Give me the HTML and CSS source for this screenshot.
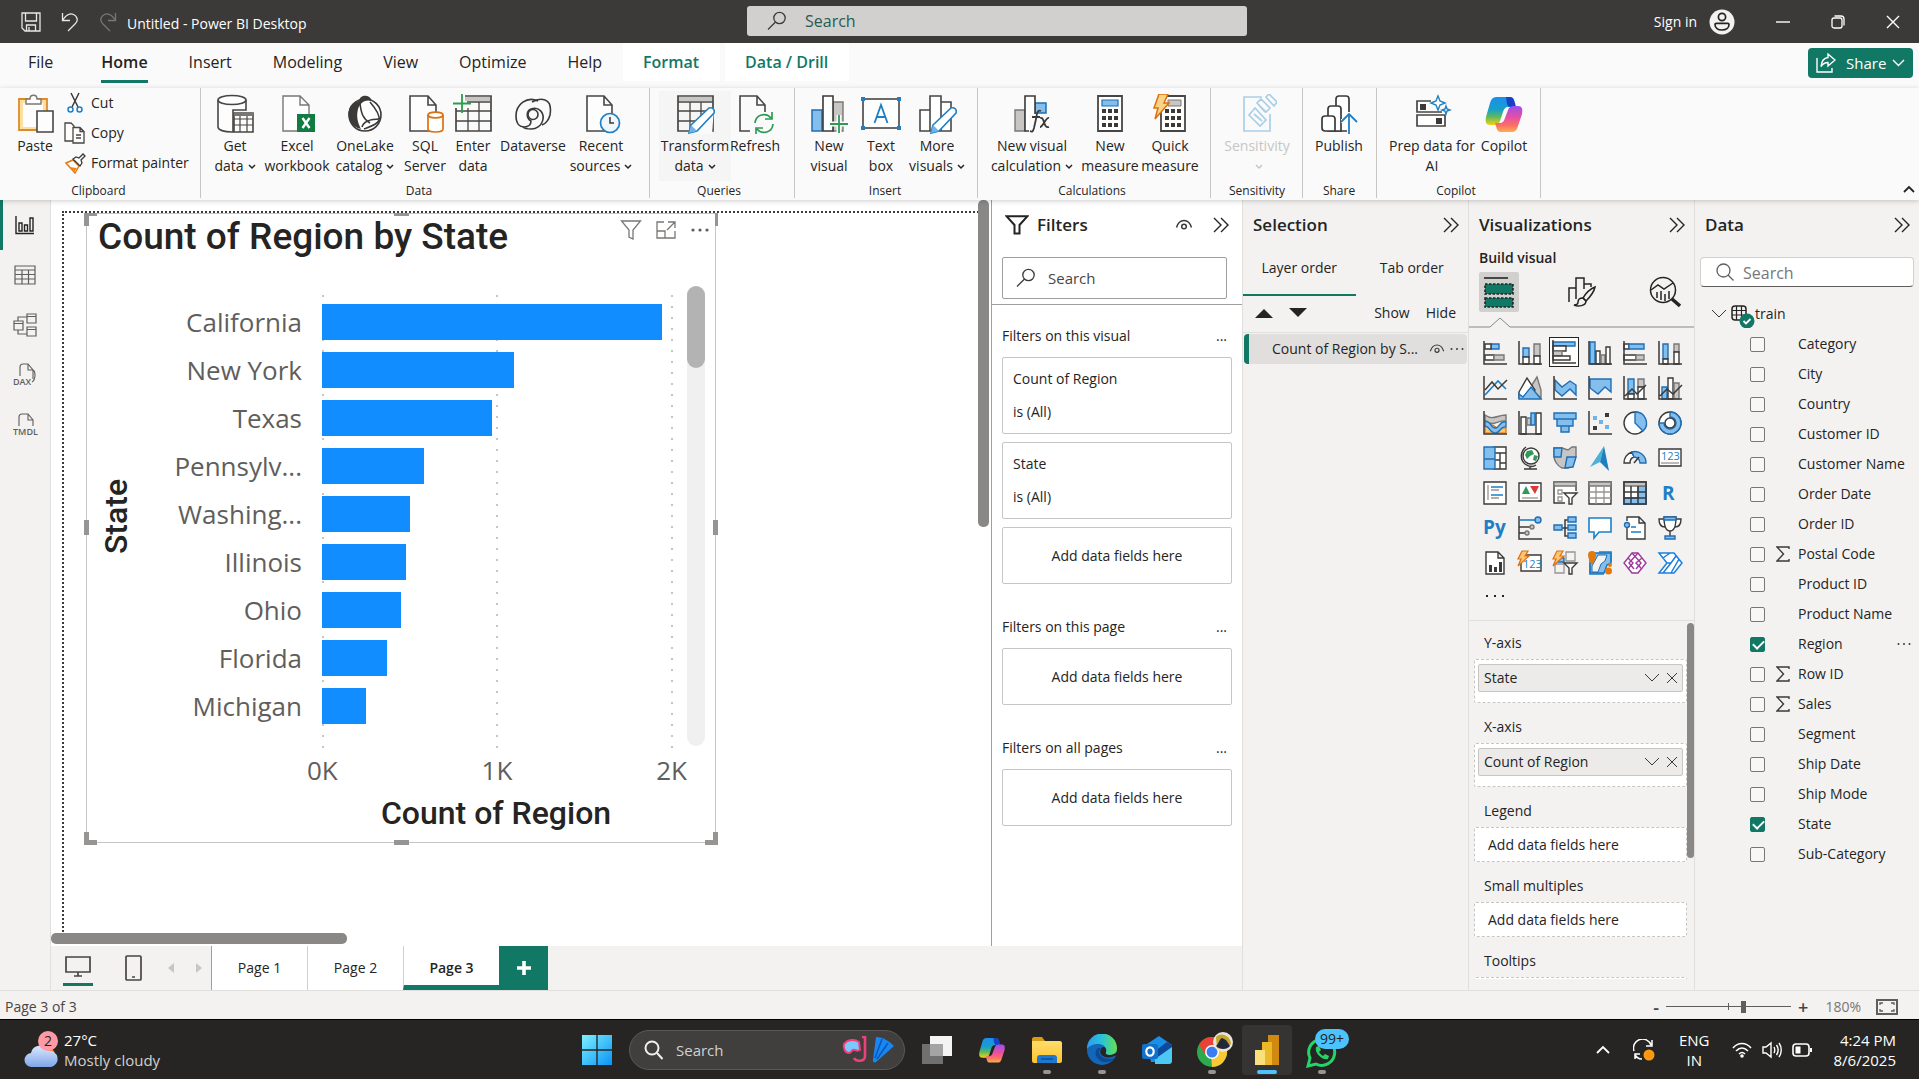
FILE: index.html
```html
<!DOCTYPE html>
<html lang="en">
<head>
<meta charset="utf-8">
<title>Untitled - Power BI Desktop</title>
<link rel="stylesheet" href="styles.css">
</head>
<body>
<svg class="defs" aria-hidden="true">
  <symbol id="i-collapse" viewBox="0 0 18 18"><path d="M2 2l7 7-7 7M9 2l7 7-7 7" fill="none" stroke="#252423" stroke-width="1.4"/></symbol>
  <symbol id="i-search" viewBox="0 0 20 20"><circle cx="12.500" cy="7" r="5.700"/><path d="M8.500 11L1 18.500"/></symbol>
  <symbol id="i-eye" viewBox="0 0 18 12"><path d="M1.500 8.500C3 3.500 6 1.500 9 1.500s6 2 7.500 7"/><circle cx="9" cy="7.500" r="2.300"/></symbol>
  <symbol id="i-down" viewBox="0 0 16 10"><path d="M1 1l7 7 7-7" fill="none" stroke="#3b3a39"/></symbol>
  <symbol id="i-x" viewBox="0 0 12 12"><path d="M1 1l10 10M11 1L1 11" fill="none" stroke="#3b3a39"/></symbol>
  <symbol id="i-caret" viewBox="0 0 8 6"><path d="M1 1l3 3 3-3" fill="none" stroke="currentColor" stroke-width="1.500"/></symbol>
  <symbol id="i-sigma" viewBox="0 0 14 16"><path d="M13 3V1H1l6.500 7L1 15h12v-2" fill="none" stroke="#3b3a39" stroke-width="1.400"/></symbol>
  <symbol id="i-copilot" viewBox="0 0 40 40">
    <path d="M12 3h13c3 0 4 2 5 6l1 4h-6c-4 0-5 2-6 5l-3 9c-1 3-3 4-6 4H6c-4 0-5-3-4-8L6 9c1-4 3-6 6-6z" fill="url(#cpA)"/>
    <path d="M22 3h4c3 0 4 2 5 6l1 4h-6c-3-1-3-3-4-10z" fill="#1742c8"/>
    <path d="M28 38H17c-3 0-4-2-5-6l-1-3h4c4 0 5-2 6-5l3-8c1-3 3-4 6-4h4c4 0 5 3 4 8l-4 12c-1 4-3 6-6 6z" fill="url(#cpB)"/>
  </symbol>
</svg>
<svg class="defs" aria-hidden="true"><defs>
  <linearGradient id="cpA" x1="0" y1="0" x2="0" y2="1"><stop offset="0" stop-color="#1b8df0"/><stop offset=".45" stop-color="#18a0c8"/><stop offset=".7" stop-color="#5cb860"/><stop offset="1" stop-color="#f8d010"/></linearGradient>
  <linearGradient id="cpB" x1="0" y1="0" x2="0" y2="1"><stop offset="0" stop-color="#9a50ee"/><stop offset=".45" stop-color="#e94fa0"/><stop offset=".75" stop-color="#fb7263"/><stop offset="1" stop-color="#fcae50"/></linearGradient>
  <linearGradient id="winG" x1="0" y1="0" x2="1" y2="1"><stop offset="0" stop-color="#7df0ff"/><stop offset="1" stop-color="#0a94f5"/></linearGradient>
  <linearGradient id="edgeG" x1="0" y1="0" x2="1" y2="0"><stop offset="0" stop-color="#2a9df0"/><stop offset=".5" stop-color="#29c3d8"/><stop offset="1" stop-color="#66e04c"/></linearGradient>
  <linearGradient id="folderG" x1="0" y1="0" x2="0" y2="1"><stop offset="0" stop-color="#ffdd6b"/><stop offset="1" stop-color="#fdc22d"/></linearGradient>
  <linearGradient id="cloudG" x1="0" y1="0" x2="0" y2="1"><stop offset="0" stop-color="#dbe8fc"/><stop offset="1" stop-color="#7fa6ea"/></linearGradient>
</defs></svg>

<div class="app">
  <header class="titlebar">
    <div class="title-left">
      <button class="plain" aria-label="Save"><svg width="20" height="20" viewBox="0 0 20 20" fill="none" stroke="#e8e8e8" stroke-width="1.300"><path d="M1 1h18v18H4l-3-3zM4.500 1v8h11V1M5.500 19v-6h9v6M8 15v4"/></svg></button>
      <button class="plain" aria-label="Undo"><svg width="18" height="20" viewBox="0 0 18 20" fill="none" stroke="#e8e8e8" stroke-width="1.300"><path d="M1.500 1v7.500H9M1.500 8.500C5 3 9 1 12.500 2.500s5.500 6 1.500 9.500l-7 7"/></svg></button>
      <button class="plain" aria-label="Redo" disabled><svg width="18" height="20" viewBox="0 0 18 20" fill="none" stroke="#797775" stroke-width="1.300"><path d="M16.500 1v7.500H9M16.500 8.500C13 3 9 1 5.500 2.500S0 8.500 4 12l7 7"/></svg></button>
      <span class="doc-name">Untitled - Power BI Desktop</span>
    </div>
    <label class="title-search"><svg class="line-dark" width="20" height="24" viewBox="0 0 20 20"><use href="#i-search"/></svg><input type="text" placeholder="Search" aria-label="Search"></label>
    <div class="title-right">
      <button class="plain signin">Sign in <svg width="26" height="26" viewBox="0 0 26 26"><circle cx="13" cy="13" r="12.500" fill="#f3f2f1"/><g fill="none" stroke="#252423" stroke-width="1.700"><circle cx="13" cy="8" r="3.600"/><path d="M6 15.500c0-.8.500-1.200 1.200-1.200h11.600c.7 0 1.200.4 1.200 1.200 0 3.500-3 5.500-7 5.500s-7-2-7-5.500z"/></g></svg></button>
      <button class="plain" aria-label="Minimize"><svg width="14" height="14" viewBox="0 0 14 14"><path d="M0 7h14" stroke="#fff" stroke-width="1.400"/></svg></button>
      <button class="plain" aria-label="Restore"><svg width="14" height="14" viewBox="0 0 14 14" fill="none" stroke="#fff" stroke-width="1.300"><rect x="1" y="3" width="10" height="10" rx="2"/><path d="M3.500 1H10a3 3 0 0 1 3 3v6.500"/></svg></button>
      <button class="plain" aria-label="Close"><svg width="14" height="14" viewBox="0 0 14 14"><path d="M1 1l12 12M13 1L1 13" stroke="#fff" stroke-width="1.400"/></svg></button>
    </div>
  </header>

  <nav class="menu">
    <button class="tab file">File</button><button class="tab active"><span>Home</span></button><button class="tab">Insert</button><button class="tab">Modeling</button><button class="tab">View</button><button class="tab">Optimize</button><button class="tab">Help</button><button class="tab context">Format</button><button class="tab context">Data / Drill</button>
    <button class="share"><svg width="20" height="20" viewBox="0 0 20 20" fill="none" stroke="#fff" stroke-width="1.400"><path d="M1 5v14h15v-4"/><path d="M12 1l7 6-7 6V9.500c-3 0-5 1-7 4C5.500 8 8 5 12 4.500z"/></svg>Share<svg width="13" height="8" viewBox="0 0 13 8"><path d="M1 1l5.500 5.500L12 1" fill="none" stroke="#fff" stroke-width="1.400"/></svg></button>
  </nav>

  <section class="ribbon">
    <div class="group clipboard">
      <div class="tiles">
        <button class="tile w56"><svg viewBox="0 0 40 40"><path d="M4 5h28v31H4z" fill="#fbe0a0" stroke="#dd8a2a" stroke-width="1.800"/><path d="M8 9h20v24H8z" fill="#fdfdfd"/><path d="M11 10V5h4c0-5 7-5 7 0h4v5z" fill="#fff" stroke="#797775" stroke-width="1.400"/><path d="M22 17h16v21H22z" fill="#fdfdfd" stroke="#484644" stroke-width="1.600"/></svg><span>Paste</span></button>
        <div class="mini-list">
          <button class="mini"><svg viewBox="0 0 22 22" fill="none"><path d="M7 1l7 14M15 1L8 15" stroke="#3b3a39" stroke-width="1.500"/><circle cx="6.500" cy="17.500" r="2.500" stroke="#1f7fc4" stroke-width="1.500"/><circle cx="15.500" cy="17.500" r="2.500" stroke="#1f7fc4" stroke-width="1.500"/></svg>Cut</button>
          <button class="mini"><svg viewBox="0 0 22 22" fill="#fdfdfd" stroke="#484644" stroke-width="1.300"><path d="M9 19H1V1h6l3 3v2"/><path d="M9 5.500h7l4 4V21H9zM16 5.500v4h4M12 13h5M12 16h5"/></svg>Copy</button>
          <button class="mini"><svg viewBox="0 0 22 22"><path d="M2 11l7-3 6 6-4 7z" fill="#fff" stroke="#e07a10" stroke-width="1.500"/><path d="M5 15l8 1-3 4z" fill="#e88a20"/><path d="M9 7l3-2 3 1 4-4 2 2-4 4 1 3-2 3z" fill="#fff" stroke="#3b3a39" stroke-width="1.300"/></svg>Format painter</button>
        </div>
      </div>
      <div class="group-name">Clipboard</div>
    </div>
    <div class="group data">
      <div class="tiles">
        <button class="tile w60"><svg viewBox="0 0 40 40"><g fill="#fdfdfd" stroke="#484644" stroke-width="1.600"><path d="M3 6v27c0 3 6 5 14 5h1V16h13V6"/><ellipse cx="17" cy="6" rx="14" ry="4.500"/><path d="M19 19h19v19H19z"/><path d="M19 25h19M19 31h19M25 22v16M32 22v16" stroke-width="1.200"/></g><path d="M19 18h19v4H19z" fill="#797775"/></svg><span>Get<br>data<svg class="caret"><use href="#i-caret"/></svg></span></button>
        <button class="tile w64"><svg viewBox="0 0 40 40"><path d="M6 2h17l9 9v26H6zM23 2v9h9" fill="#fdfdfd" stroke="#797775" stroke-width="1.400"/><rect x="20" y="20" width="18" height="18" fill="#107c41"/><path d="M25.500 24l7 10M32.500 24l-7 10" stroke="#fff" stroke-width="2.400"/></svg><span>Excel<br>workbook</span></button>
        <button class="tile w72"><svg viewBox="0 0 40 40"><circle cx="20" cy="21" r="16" fill="#fff" stroke="#3b3a39" stroke-width="1.600"/><path d="M14 7C15 0 25 0 27 7c-6-2-12 1-14 8-2 8 0 14 3 20C6 33 2 24 4 16c1-5 5-8 10-9z" fill="#3b3a39"/><path d="M15 9c1 10 3 16 10 20M25 8c6 7 10 14 9 18s-7 6-15 9M17 33c2-7 10-8 18-8" fill="none" stroke="#3b3a39" stroke-width="1.600"/></svg><span>OneLake<br>catalog<svg class="caret"><use href="#i-caret"/></svg></span></button>
        <button class="tile w48"><svg viewBox="0 0 40 40"><path d="M5 2h18l8 9v26H5zM23 2v9h8" fill="#fdfdfd" stroke="#484644" stroke-width="1.600"/><g fill="#fff" stroke="#dd7010" stroke-width="1.700"><path d="M23 21v14c0 4 15 4 15 0V21"/><ellipse cx="30.500" cy="21" rx="7.500" ry="2.800"/></g></svg><span>SQL<br>Server</span></button>
        <button class="tile w48"><svg viewBox="0 0 40 40"><path d="M12 3h25v4H12z" fill="#c8c6c4"/><g fill="none" stroke="#484644" stroke-width="1.700"><path d="M12 2h26v35H3V14"/><path d="M14 8h23M3 17h35M3 27h35M15 14v23M26 8v29" stroke-width="1.300"/></g><path d="M9 0v19M0 9.500h18" stroke="#2c9c4c" stroke-width="1.800"/></svg><span>Enter<br>data</span></button>
        <button class="tile w72"><svg viewBox="0 0 40 40" fill="none" stroke="#3b3a39" stroke-width="1.600"><path d="M25 7C14 2 3 10 3 22c0 8 4 11 8 11 5 0 7-3 7-6-5-3-5-10 0-12 8-3 13 4 12 10-1 7-7 10-12 10-4 0-7-1-8-2"/><path d="M19 8c5-3 10-3 13-2 6 2 6 9 5 15-1 4-4 9-8 10"/><circle cx="20" cy="20.500" r="5"/></svg><span>Dataverse</span></button>
        <button class="tile w64"><svg viewBox="0 0 40 40"><path d="M6 2h17l8 9v26H6zM23 2v9h8" fill="#fdfdfd" stroke="#484644" stroke-width="1.600"/><circle cx="29" cy="29" r="9.500" fill="#f0f7fd" stroke="#1f7fc4" stroke-width="1.700"/><path d="M29 23v6h4" fill="none" stroke="#3b3a39" stroke-width="1.500"/></svg><span>Recent<br>sources<svg class="caret"><use href="#i-caret"/></svg></span></button>
      </div>
      <div class="group-name">Data</div>
    </div>
    <div class="group queries">
      <div class="tiles">
        <button class="tile w72 hover"><svg viewBox="0 0 40 40"><path d="M3 3h34v4H3z" fill="#c8c6c4"/><path d="M3 2h35v35H3z" fill="none" stroke="#484644" stroke-width="1.700"/><path d="M3 8h35M3 17h35M3 27h35M15 8v29M26 8v29" stroke="#484644" stroke-width="1.300"/><path d="M39 14l-2 26H18z" fill="#fafafa"/><path d="M16 31l18-17c4-1 6 2 5 5L22 37l-8 2z" fill="#fff" stroke="#1f7fc4" stroke-width="1.600"/><path d="M16 31l6 6-8 2z" fill="#6fb3ea"/></svg><span>Transform<br>data<svg class="caret"><use href="#i-caret"/></svg></span></button>
        <button class="tile w48"><svg viewBox="0 0 40 40"><path d="M15 37H5V2h17l8 9v7M22 2v9h8" fill="none" stroke="#484644" stroke-width="1.600"/><path d="M20 29a9 9 0 0 1 16-5M38 30a9 9 0 0 1-16 5M37 18v7h-7M21 40v-6h7" fill="none" stroke="#2f9a55" stroke-width="1.700"/></svg><span>Refresh</span></button>
      </div>
      <div class="group-name">Queries</div>
    </div>
    <div class="group insert">
      <div class="tiles">
        <button class="tile w56"><svg viewBox="0 0 40 40"><path d="M24 8h10v29H24z" fill="#c8c6c4" stroke="#797775" stroke-width="1.400"/><path d="M3 16h10v21H3z" fill="#83beec" stroke="#1f6fb4" stroke-width="1.500"/><path d="M14 2h10v35H14z" fill="#fff" stroke="#3b3a39" stroke-width="1.600"/><path d="M30 21v19M20 30h19" stroke="#fafafa" stroke-width="5"/><path d="M30 21v18M21 30h18" stroke="#2f9a55" stroke-width="1.800"/></svg><span>New<br>visual</span></button>
        <button class="tile w48"><svg viewBox="0 0 40 40"><path d="M2 5h36v29H2z" fill="#fff" stroke="#3b3a39" stroke-width="1.500"/><g fill="#1f7fc4"><path d="M0 3h4v4H0zM36 3h4v4h-4zM0 32h4v4H0zM36 32h4v4h-4z"/></g><path d="M13.500 29L20 11l6.500 18M15.500 23h9" fill="none" stroke="#1f7fc4" stroke-width="1.800"/></svg><span>Text<br>box</span></button>
        <button class="tile w64"><svg viewBox="0 0 40 40"><g fill="#fff" stroke="#484644" stroke-width="1.600"><path d="M24 8h10v29H24zM3 16h10v21H3zM13 2h11v35H13z"/></g><path d="M16 31l18-17c4-1 6 2 5 5L22 37l-8 2z" fill="#fff" stroke="#1f7fc4" stroke-width="1.600"/><path d="M16 31l6 6-8 2z" fill="#6fb3ea"/></svg><span>More<br>visuals<svg class="caret"><use href="#i-caret"/></svg></span></button>
      </div>
      <div class="group-name">Insert</div>
    </div>
    <div class="group calc">
      <div class="tiles">
        <button class="tile w84"><svg viewBox="0 0 40 40"><path d="M3 16h10v21H3z" fill="#c8c6c4" stroke="#797775" stroke-width="1.400"/><path d="M23 9h11v10H23z" fill="#83beec" stroke="#1f6fb4" stroke-width="1.500"/><path d="M13 2h10v35H13z" fill="#fff" stroke="#3b3a39" stroke-width="1.600"/><path d="M17 20h22v20H17z" fill="#fafafa"/><path d="M29 17c-4-2-4 3-5 8l-2 9c-1 4-2 4-4 3M20 23h8M28 24c5-2 3 11 9 9M37 24c-3-1-6 9-9 9" fill="none" stroke="#3b3a39" stroke-width="1.800"/></svg><span>New visual<br>calculation<svg class="caret"><use href="#i-caret"/></svg></span></button>
        <button class="tile w72"><svg viewBox="0 0 40 40"><path d="M8 2h24v35H8z" fill="#fff" stroke="#484644" stroke-width="1.800"/><path d="M12 6h16v6H12z" fill="#83beec" stroke="#1f6fb4" stroke-width="1.200"/><path d="M12 17h16M12 24h16M12 31h16" stroke="#3b3a39" stroke-width="4" stroke-dasharray="4 2"/></svg><span>New<br>measure</span></button>
        <button class="tile w48"><svg viewBox="0 0 40 40"><path d="M11 2h24v35H11z" fill="#fff" stroke="#484644" stroke-width="1.800"/><path d="M18 6h13v6H18z" fill="#c8c6c4" stroke="#797775" stroke-width="1"/><path d="M15 17h16M15 24h16M15 31h16" stroke="#3b3a39" stroke-width="4" stroke-dasharray="4 2"/><path d="M9 0h9l-4 9h5L5 25l3-11H4z" fill="#fbd384" stroke="#dd7010" stroke-width="1.500"/></svg><span>Quick<br>measure</span></button>
      </div>
      <div class="group-name">Calculations</div>
    </div>
    <div class="group sens">
      <div class="tiles">
        <button class="tile w72" disabled><svg viewBox="0 0 40 40" fill="none" stroke="#a8cfe8" stroke-width="1.700"><path d="M25 3H7v34h26V20"/><path d="M12 21l6-7 11 12-6 6zM17 20l8 7"/><path d="M20 9l8 9M24 5l9 9-4 4-9-9zM29 3l3-3 8 8-3 4z"/></svg><span>Sensitivity<br><svg class="caret"><use href="#i-caret"/></svg></span></button>
      </div>
      <div class="group-name">Sensitivity</div>
    </div>
    <div class="group pub">
      <div class="tiles">
        <button class="tile w56"><svg viewBox="0 0 40 40"><g fill="#fff" stroke="#3b3a39" stroke-width="1.700"><path d="M17 37V5c0-2 1-3 3-3h7c2 0 3 1 3 3v32z"/><path d="M9 37V15c0-2 1-3 3-3h7c2 0 3 1 3 3v22z"/><path d="M3 34V25c0-2 1-3 3-3h7c2 0 3 1 3 3v12H6c-2 0-3-1-3-3z"/></g><path d="M30 18v22M22 27h16" stroke="#fafafa" stroke-width="4"/><path d="M30 40V20M22 28l8-8 8 8" fill="none" stroke="#1f7fc4" stroke-width="1.800"/></svg><span>Publish</span></button>
      </div>
      <div class="group-name">Share</div>
    </div>
    <div class="group cop">
      <div class="tiles">
        <button class="tile w96"><svg viewBox="0 0 40 40"><path d="M5 7h28v11H5zM5 21h28v11H5z" fill="#fff" stroke="#484644" stroke-width="1.700"/><path d="M8 10h6v6H8zM24 24h6v6h-6z" fill="#3b3a39"/><path d="M17 0h22v19H17z" fill="#fafafa"/><path d="M17 7h2M17 18h13" stroke="#484644" stroke-width="1.700"/><path d="M26 2l2 5 5 2-5 2-2 5-2-5-5-2 5-2zM34 12l1 3 3 1-3 1-1 3-1-3-3-1 3-1z" fill="#fff" stroke="#1f7fc4" stroke-width="1.400"/></svg><span>Prep data for<br>AI</span></button>
        <button class="tile w48"><svg viewBox="0 0 40 40"><use href="#i-copilot"/></svg><span>Copilot</span></button>
      </div>
      <div class="group-name">Copilot</div>
    </div>
    <button class="plain ribbon-up" aria-label="Collapse ribbon"><svg width="12" height="8" viewBox="0 0 12 8"><path d="M1 7l5-5 5 5" fill="none" stroke="#252423" stroke-width="1.800"/></svg></button>
  </section>

  <main class="work">
    <nav class="rail">
      <button class="rail-item on" aria-label="Report view"><svg width="20" height="20" viewBox="0 0 20 20" fill="none" stroke="#252423" stroke-width="1.400"><path d="M1 1v17.500h18M4 8h3v8H4zM9.500 10h3v6h-3zM15 3h3v13h-3z"/></svg></button>
      <button class="rail-item" aria-label="Table view"><svg width="22" height="20" viewBox="0 0 22 20" fill="none" stroke="#605e5c" stroke-width="1.200"><path d="M1 1h20v18H1zM1 5h20M1 9.500h20M1 14h20M8 5v14M14.500 5v14"/></svg></button>
      <button class="rail-item" aria-label="Model view"><svg width="24" height="24" viewBox="0 0 24 24" fill="none" stroke="#605e5c" stroke-width="1.200"><path d="M1 8h9v9H1zM1 10.500h9M14 1h9v9h-9zM14 3.500h9M14 14h9v9h-9zM14 16.500h9M5 8V4h9M5 17v4h9"/></svg></button>
      <button class="rail-item" aria-label="DAX query view"><svg width="28" height="24" viewBox="0 0 28 24" fill="none" stroke="#605e5c" stroke-width="1.100"><path d="M9 13V4c0-2 1-3 3-3h5l5 6v9M17 1v6h5c2 1 2 3 2 5s0 5-3 7"/><text class="rail-text" x="2" y="22">DAX</text></svg></button>
      <button class="rail-item" aria-label="TMDL view"><svg width="28" height="24" viewBox="0 0 28 24" fill="none" stroke="#605e5c" stroke-width="1.100"><path d="M8 13V4c0-2 1-3 3-3h6l5 6v6M17 1v6h5"/><text class="rail-text" x="2" y="22">TMDL</text></svg></button>
    </nav>

    <div class="center">
      <div class="stage">
        <div class="canvas">
          <div class="page">
            <article class="visual">
              <i class="h tl"></i><i class="h tc"></i><i class="h tr"></i><i class="h ml"></i><i class="h mr"></i><i class="h bl"></i><i class="h bc"></i><i class="h br"></i>
              <header class="visual-head">
                <h2>Count of Region by State</h2>
                <div class="visual-tools"><svg width="22" height="20" viewBox="0 0 22 20"><path d="M1.500 1h19l-7.500 9v9l-4-2v-7z"/></svg><svg width="20" height="18" viewBox="0 0 20 18"><path d="M8 1H1v16h18v-7M1 10h8v7M12 1h7v6M19 1l-8 8"/></svg><svg width="20" height="6" viewBox="0 0 20 6"><g fill="#605e5c" stroke="none"><circle cx="3" cy="3" r="1.600"/><circle cx="10" cy="3" r="1.600"/><circle cx="17" cy="3" r="1.600"/></g></svg></div>
              </header>
              <div class="chart">
                <div class="y-title">State</div>
                <div class="rows">
                  <svg class="gridlines" width="352" height="454"><path d="M1 1V454M175 1V454M350 1V454" stroke="#c8c6c4" stroke-width="2" stroke-dasharray="2 9"/></svg>
                  <div class="bar-row"><span>California</span><b style="width:340px"></b></div>
                  <div class="bar-row"><span>New York</span><b style="width:192px"></b></div>
                  <div class="bar-row"><span>Texas</span><b style="width:170px"></b></div>
                  <div class="bar-row"><span>Pennsylv...</span><b style="width:102px"></b></div>
                  <div class="bar-row"><span>Washing...</span><b style="width:88px"></b></div>
                  <div class="bar-row"><span>Illinois</span><b style="width:84px"></b></div>
                  <div class="bar-row"><span>Ohio</span><b style="width:79px"></b></div>
                  <div class="bar-row"><span>Florida</span><b style="width:65px"></b></div>
                  <div class="bar-row"><span>Michigan</span><b style="width:44px"></b></div>
                </div>
                <div class="chart-scroll"><i></i></div>
                <div class="ticks"><span>0K</span><span>1K</span><span>2K</span></div>
                <div class="x-title">Count of Region</div>
              </div>
            </article>
          </div>
          <i class="vbar"></i><i class="hbar"></i>
        </div>

        <aside class="filters">
          <header class="pane-head"><svg width="24" height="20" viewBox="0 0 24 20"><path d="M1.500 1.200h21L14.500 10v8.500h-5V10z" fill="none" stroke="#252423" stroke-width="2"/></svg><h2>Filters</h2><svg class="eye" width="18" height="12"><use href="#i-eye"/></svg><button class="plain" aria-label="Collapse filters"><svg width="18" height="18"><use href="#i-collapse"/></svg></button></header>
          <div class="filters-search"><label class="box"><svg class="line-dark" width="20" height="20"><use href="#i-search"/></svg><input type="text" placeholder="Search" aria-label="Search filters"></label></div>
          <section class="filter-group">
            <h3>Filters on this visual<span>...</span></h3>
            <div class="card"><p>Count of Region</p><p>is (All)</p></div>
            <div class="card"><p>State</p><p>is (All)</p></div>
            <div class="drop">Add data fields here</div>
          </section>
          <section class="filter-group">
            <h3>Filters on this page<span>...</span></h3>
            <div class="drop">Add data fields here</div>
          </section>
          <section class="filter-group">
            <h3>Filters on all pages<span>...</span></h3>
            <div class="drop">Add data fields here</div>
          </section>
        </aside>
      </div>

      <footer class="pages">
        <button class="view on" aria-label="Desktop layout"><svg width="26" height="22" viewBox="0 0 26 22" fill="none" stroke="#484644" stroke-width="1.700"><path d="M1 1h24v15H1zM13 16v4M9 20h8"/></svg></button>
        <button class="view" aria-label="Mobile layout"><svg width="18" height="26" viewBox="0 0 18 26"><rect x="1" y="1" width="15" height="24" rx="1" fill="none" stroke="#484644" stroke-width="1.700"/><path d="M7 22h3" stroke="#484644" stroke-width="1.500"/></svg></button>
        <svg class="step" width="8" height="12" viewBox="0 0 8 12"><path d="M7 1v10L1 6z" fill="#c8c6c4"/></svg>
        <svg class="step" width="8" height="12" viewBox="0 0 8 12"><path d="M1 1v10l6-5z" fill="#c8c6c4"/></svg>
        <button class="page-tab">Page 1</button><button class="page-tab">Page 2</button><button class="page-tab on">Page 3</button>
        <button class="page-add" aria-label="New page"><svg width="14" height="14" viewBox="0 0 14 14"><path d="M7 0v14M0 7h14" stroke="#fff" stroke-width="3.600"/></svg></button>
      </footer>
    </div>

    <aside class="pane selection">
      <header class="pane-head"><h2>Selection</h2><button class="plain" aria-label="Collapse selection"><svg width="18" height="18"><use href="#i-collapse"/></svg></button></header>
      <div class="order-tabs"><button class="on">Layer order</button><button>Tab order</button></div>
      <div class="order-tools"><svg width="18" height="10" viewBox="0 0 18 10"><path d="M0 10l9-9 9 9z" fill="#252423"/></svg><svg width="18" height="10" viewBox="0 0 18 10"><path d="M0 0l9 9 9-9z" fill="#252423"/></svg><button class="plain show">Show</button><button class="plain">Hide</button></div>
      <div class="layer"><span>Count of Region by S...</span><svg class="eye" width="16" height="12" viewBox="0 0 18 12"><use href="#i-eye"/></svg><svg width="14" height="4" viewBox="0 0 14 4" fill="#3b3a39"><circle cx="1.500" cy="2" r="1"/><circle cx="7" cy="2" r="1"/><circle cx="12.500" cy="2" r="1"/></svg></div>
    </aside>

    <aside class="pane viz">
      <header class="pane-head"><h2>Visualizations</h2><button class="plain" aria-label="Collapse visualizations"><svg width="18" height="18"><use href="#i-collapse"/></svg></button></header>
      <h3 class="build">Build visual</h3>
      <div class="modes">
        <button class="mode on" aria-label="Build visual"><svg width="32" height="32" viewBox="0 0 32 32"><path d="M1 2h24" stroke="#252423" stroke-width="1.600"/><path d="M2 8h28v10H2zM2 22h28v9H2z" fill="#117865" stroke="#252423" stroke-width="1.600" stroke-dasharray="2.500 1.500"/></svg></button>
        <button class="mode" aria-label="Format visual"><svg width="28" height="30" viewBox="0 0 28 30" fill="none" stroke="#252423" stroke-width="1.500"><path d="M1 25V11h7M8 22V1h8v11M16 7h7v3"/><path d="M27 10c-5 2-9 6-12 11l3 3c4-4 8-9 9-14z"/><path d="M15 21c-4 0-5 2-5 4s-2 3-4 3c4 2 12 1 12-4z"/></svg></button>
        <button class="mode" aria-label="Analytics"><svg width="32" height="32" viewBox="0 0 32 32" fill="none" stroke="#252423" stroke-width="1.500"><circle cx="14" cy="14" r="12.500"/><path d="M2 14l7-5 6 4 9-6M8 22v-6M12 24v-9M16 25v-7M20 23v-8"/><path d="M23 23l8 7" stroke-width="3.500"/></svg></button>
      </div>
      <svg class="notch" width="225" height="11" viewBox="0 0 225 11"><path d="M0 10H21L31 1L41 10H225" fill="none" stroke="#8a8886"/></svg>
      <div class="gallery">
        <button aria-label="Stacked bar chart"><svg viewBox="0 0 24 24"><path class="b" d="M8 3h8v5H8z"/><path class="w" d="M2 3h6v5H2z"/><path class="w" d="M2 14h9v5H2z"/><path class="g" d="M11 14h10v5H11z"/><path class="n" d="M1 0v23h23"/></svg></button>
        <button aria-label="Stacked column chart"><svg viewBox="0 0 24 24"><path class="b" d="M5 7h6v9H5z"/><path class="w" d="M5 16h6v7H5z"/><path class="g" d="M16 3h6v12h-6z"/><path class="w" d="M16 15h6v8h-6z"/><path class="n" d="M1 0v23h23"/></svg></button>
        <button class="picked" aria-label="Clustered bar chart"><svg viewBox="0 0 24 24"><path class="b" d="M1 2h22v4H1z"/><path class="w" d="M1 6h13v5H1z"/><path class="g" d="M1 11h9v5H1z"/><path class="w" d="M1 16h17v4H1z"/><path class="n" d="M1 0v23h23"/></svg></button>
        <button aria-label="Clustered column chart"><svg viewBox="0 0 24 24"><path class="b" d="M2 1h5v22H2z"/><path class="w" d="M8 10h4v13H8z"/><path class="g" d="M13 14h4v9h-4z"/><path class="w" d="M18 6h4v17h-4z"/><path class="n" d="M1 0v23h23"/></svg></button>
        <button aria-label="100% stacked bar chart"><svg viewBox="0 0 24 24"><path class="w" d="M1 3h5v5H1z"/><path class="b" d="M6 3h15v5H6z"/><path class="w" d="M1 14h12v5H1z"/><path class="g" d="M13 14h8v5h-8z"/><path class="n" d="M1 0v23h23"/></svg></button>
        <button aria-label="100% stacked column chart"><svg viewBox="0 0 24 24"><path class="b" d="M5 3h5v15H5z"/><path class="w" d="M5 18h5v5H5z"/><path class="g" d="M16 3h5v8h-5z"/><path class="w" d="M16 11h5v12h-5z"/><path class="n" d="M1 0v23h23"/></svg></button>

        <button aria-label="Line chart"><svg viewBox="0 0 24 24"><path class="bl" d="M2 19L15 5l8 8"/><path class="n" d="M2 14L9 6l6 7 9-9"/><path class="n" d="M1 0v23h23"/></svg></button>
        <button aria-label="Area chart"><svg viewBox="0 0 24 24"><path class="g" d="M12 12l7-11 4 13v8z"/><path class="w" d="M1 16L9 2l8 12-4 8H1z"/><path class="b" d="M1 23l0-5 4 3 8-10 10 12z"/></svg></button>
        <button aria-label="Stacked area chart"><svg viewBox="0 0 24 24"><path class="b" d="M2 4l7 7 8-6 6 4v10l-6-6-8 7-7-6z"/><path class="n" d="M1 0v23h23"/></svg></button>
        <button aria-label="100% stacked area chart"><svg viewBox="0 0 24 24"><path class="b" d="M2 3h21v13l-6-5-7 7-8-6z"/><path class="n" d="M1 0v23h23"/></svg></button>
        <button aria-label="Line and stacked column chart"><svg viewBox="0 0 24 24"><path class="b" d="M5 3h6v15H5z"/><path class="w" d="M5 18h6v5H5z"/><path class="g" d="M15 3h6v8h-6z"/><path class="w" d="M15 11h6v12h-6z"/><path class="n" d="M1 0v23h23M2 20l7-7 5 5 9-9"/></svg></button>
        <button aria-label="Line and clustered column chart"><svg viewBox="0 0 24 24"><path class="b" d="M4 11h5v12H4z"/><path class="w" d="M10 2h5v21h-5z"/><path class="g" d="M16 7h5v16h-5z"/><path class="n" d="M1 0v23h23M2 20l7-7 6 5 9-9"/></svg></button>

        <button aria-label="Ribbon chart"><svg viewBox="0 0 24 24"><path class="g" d="M2 4c8 6 12 0 21 0v6c-9-1-12 6-21 0z"/><path class="o" d="M2 14h8l4 3h9v5H2z"/><path class="b" d="M2 10c8 1 5 8 11 7 4-1 4-8 10-6v5c-6-1-5 5-10 6-7 0-5-6-11-7z"/><path class="n" d="M1 0v23h23"/></svg></button>
        <button aria-label="Waterfall chart"><svg viewBox="0 0 24 24"><path class="w" d="M3 6h5v17H3zM18 2h5v21h-5z"/><path class="g" d="M9 7h4v7H9z"/><path class="b" d="M13 2h4v12h-4z"/><path class="n" d="M1 0v23h23"/></svg></button>
        <button aria-label="Funnel"><svg viewBox="0 0 24 24"><path class="b" d="M1 2h22v6H1zM4 8h16v7H4zM8 15h8v6H8z"/></svg></button>
        <button aria-label="Scatter chart"><svg viewBox="0 0 24 24"><path fill="#6fb3ea" d="M5 5h4v4H5zM11 9h4v4h-4zM17 14h4v4h-4z"/><path fill="#3b3a39" d="M17 2h4v4h-4zM5 15h4v4H5z"/><path class="n" d="M1 0v23h23"/></svg></button>
        <button aria-label="Pie chart"><svg viewBox="0 0 24 24"><circle class="w" cx="12" cy="12" r="11"/><path class="b" d="M12 1a11 11 0 0 1 8 19l-8-8z"/></svg></button>
        <button aria-label="Donut chart"><svg viewBox="0 0 24 24"><circle class="w" cx="12" cy="12" r="11"/><path class="b" d="M12 1a11 11 0 1 1-11 11h5a6 6 0 1 0 6-6z"/><circle class="w" cx="12" cy="12" r="5"/></svg></button>

        <button aria-label="Treemap"><svg viewBox="0 0 24 24"><path class="w" d="M11 1h12v22H11zM11 7h12M17 7v16M11 14h6M17 17h6"/><path class="b" d="M1 1h11v22H1zM1 13h11"/></svg></button>
        <button aria-label="Map"><svg viewBox="0 0 24 24"><circle class="w" cx="13" cy="10" r="8"/><path d="M9 5l5-1 2 4-4 2-3 3-2-4zM16 9l4 1-2 5-3-1z" fill="#2f9a55"/><path class="n" d="M8 1C2 5 2 14 7 18c4 3 8 3 11 1M12 20v3M6 23h13"/></svg></button>
        <button aria-label="Filled map"><svg viewBox="0 0 24 24"><path class="g" d="M1 2h8l6 2 4-3h4v9c-1 6-3 10-8 12H9C4 20 1 14 1 10z"/><path class="b" d="M1 2h8l-1 9H1zM14 11h9l-3 10-8 1z"/></svg></button>
        <button aria-label="Azure map"><svg viewBox="0 0 24 24"><path d="M16 0L2 21l10-5z" fill="#4fb0d8"/><path d="M16 0l5 25-9-9z" fill="#1b7fc0"/></svg></button>
        <button aria-label="Gauge"><svg viewBox="0 0 24 24"><path class="w" d="M1 17A11 11 0 0 1 9 6l2 5a6 6 0 0 0-4 6z"/><path class="b" d="M9 6a11 11 0 0 1 14 11h-6a6 6 0 0 0-6-6z"/><path class="n" d="M11 17l5-6"/></svg></button>
        <button aria-label="Card"><svg viewBox="0 0 24 24"><path class="w" d="M1 3h22v17H1z"/><path class="gl" d="M3 17h18"/><text class="num" x="3" y="14">123</text></svg></button>

        <button aria-label="Multi-row card"><svg viewBox="0 0 24 24"><path class="w" d="M1 1h22v22H1z"/><path class="gl" d="M5 4v15M8 9h8M8 17h8"/><path class="bl" d="M8 6h12M8 14h12" stroke-width="2"/></svg></button>
        <button aria-label="KPI"><svg viewBox="0 0 24 24"><path class="w" d="M1 2h22v18H1z"/><path d="M4 13l4-8 4 8z" fill="#2f9a55"/><path d="M12 5h9l-4 8z" fill="#d83b3b"/><path class="gl" d="M4 17h16"/></svg></button>
        <button aria-label="Slicer"><svg viewBox="0 0 24 24"><path class="w" d="M12 22H1V1h22v9"/><path class="g" d="M1 1h22v4H1z"/><path class="gl" d="M5 9h4v4H5zM5 16h4v4H5z"/><path class="w" d="M11 12h13l-5 5v6h-3v-6z"/></svg></button>
        <button aria-label="Table"><svg viewBox="0 0 24 24"><path class="w" d="M1 1h22v22H1z"/><path class="g" d="M1 1h22v4H1z"/><path class="gl" d="M1 11h22M1 17h22M8 5v18M16 5v18"/></svg></button>
        <button aria-label="Matrix"><svg viewBox="0 0 24 24"><path class="w" d="M1 1h22v22H1z"/><path class="b" d="M15 5h8v18H1v-6h14z"/><path class="g" d="M1 1h22v4H1z"/><path class="n" d="M1 11h22M1 17h22M8 5v18M15 5v18M1 1h22v22H1z"/></svg></button>
        <button aria-label="R visual"><svg viewBox="0 0 24 24"><text class="letters" x="4" y="19">R</text></svg></button>

        <button aria-label="Python visual"><svg viewBox="0 0 24 24"><text class="letters" x="0" y="18">Py</text></svg></button>
        <button aria-label="Key influencers"><svg viewBox="0 0 24 24"><path class="n" d="M1 0v23h23M1 11h11M1 17h6"/><path class="bl" d="M2 4h16"/><circle class="b" cx="20" cy="4" r="3"/><circle class="g" cx="14" cy="11" r="2"/><circle class="g" cx="9" cy="17" r="2"/></svg></button>
        <button aria-label="Decomposition tree"><svg viewBox="0 0 24 24"><path class="n" d="M8 12h7M15 4h-3v16h3"/><path class="b" d="M1 9h8v5H1zM15 1h8v5h-8zM15 9h8v5h-8zM15 17h8v5h-8z"/></svg></button>
        <button aria-label="Q&amp;A"><svg viewBox="0 0 24 24"><path d="M1 2h22v14H11l-5 6v-6H1z" fill="#fff" class="bl"/></svg></button>
        <button aria-label="Narrative"><svg viewBox="0 0 24 24"><path class="w" d="M4 5V1h12l6 6v16H4V11M16 1v6h6"/><path class="bl" d="M8 11h5M8 16h10"/><circle class="b" cx="4" cy="9" r="2.500"/></svg></button>
        <button aria-label="Metrics"><svg viewBox="0 0 24 24"><path class="w" d="M6 3H1c0 6 2 8 6 8M18 3h5c0 6-2 8-6 8M6 1h12c0 10-2 14-6 14S6 11 6 1zM12 15v5"/><path class="b" d="M6 1h12v3H6zM7 20h10v3H7z"/></svg></button>

        <button aria-label="Paginated report"><svg viewBox="0 0 24 24"><path class="w" d="M3 1h12l6 6v16H3zM15 1v6h6"/><path d="M6 14h3v7H6zM11 16h3v5h-3zM16 11h3v10h-3z" fill="#3b3a39"/></svg></button>
        <button aria-label="New card"><svg viewBox="0 0 24 24"><path class="w" d="M3 4h20v16H3z"/><text class="num" x="5" y="17">123</text><path class="o" d="M4 0h6L7 5h4L0 15l3-7H0z"/></svg></button>
        <button aria-label="Button slicer"><svg viewBox="0 0 24 24"><path class="gl" d="M13 1h9v9h-9zM2 13h9v9H2z"/><path class="b" d="M5 7h6v4H5z"/><path class="w" d="M11 12h13l-5 5v6h-3v-6z"/><path class="o" d="M4 0h6L7 5h4L0 15l3-7H0z"/></svg></button>
        <button aria-label="ArcGIS map"><svg viewBox="0 0 24 24"><path class="b" d="M2 8V2h21v10l-4 2-3 8H2z"/><path class="a" d="M10 4h9l-2 6-4 3-3 8H4v-6z"/><path class="bl" d="M2 12v11h14M11 1h12v10"/><path d="M0 4a4 4 0 0 1 8 0c0 4-4 10-4 10S0 8 0 4zM17 20a3 3 0 1 0 7 0 3 3 0 0 0-7 0zM20 14a2 2 0 1 0 4 0 2 2 0 0 0-4 0z" fill="#e07a10"/></svg></button>
        <button aria-label="Power Apps"><svg viewBox="0 0 24 24" fill="#fff" stroke="#9b3a9b" stroke-width="1.400"><path d="M9 2h6l8 10-8 10H9L1 12z"/><path d="M9 2l9 10-5 6M15 2L6 12l5 6M5 7l5 5-5 6M19 7l-6 5 6 6"/></svg></button>
        <button aria-label="Power Automate"><svg viewBox="0 0 24 24" fill="#fff" stroke="#1b7fe0" stroke-width="1.500"><path d="M1 2h15l8 10-8 10H1l8-10zM5 7l7-5M9 12l4 0L5 22M13 12l5-7M13 22l8-14"/></svg></button>
      </div>
      <div class="more-viz"><i></i><i></i><i></i></div>
      <div class="wells">
        <i class="wells-bar"></i>
        <h4>Y-axis</h4>
        <div class="well filled"><div class="pill">State<svg width="16" height="10"><use href="#i-down"/></svg><svg width="12" height="12"><use href="#i-x"/></svg></div></div>
        <h4>X-axis</h4>
        <div class="well filled"><div class="pill">Count of Region<svg width="16" height="10"><use href="#i-down"/></svg><svg width="12" height="12"><use href="#i-x"/></svg></div></div>
        <h4>Legend</h4>
        <div class="well">Add data fields here</div>
        <h4>Small multiples</h4>
        <div class="well">Add data fields here</div>
        <h4>Tooltips</h4>
        <div class="well"></div>
      </div>
    </aside>

    <aside class="pane fields">
      <header class="pane-head"><h2>Data</h2><button class="plain" aria-label="Collapse data"><svg width="18" height="18"><use href="#i-collapse"/></svg></button></header>
      <label class="box data-search"><svg width="18" height="18" viewBox="0 0 18 18" fill="none" stroke="#605e5c" stroke-width="1.300"><circle cx="7.500" cy="7.500" r="6.500"/><path d="M12 12l5.500 5.500"/></svg><input type="text" placeholder="Search" aria-label="Search fields"></label>
      <div class="table-name"><svg width="16" height="10"><use href="#i-down"/></svg><svg width="24" height="24" viewBox="0 0 24 24"><rect x="1" y="2" width="14" height="14" rx="3" fill="none" stroke="#252423" stroke-width="1.500"/><path d="M1 6.500h14M1 11h14M5.500 2v14M10.500 2v14" stroke="#252423" stroke-width="1.200"/><circle cx="16" cy="17" r="7.500" fill="#117865"/><path d="M12.500 17l2.500 2.500 4.500-4.500" fill="none" stroke="#fff" stroke-width="1.800"/></svg>train</div>
      <ul class="field-list">
        <li><label><input type="checkbox"><i></i>Category</label></li>
        <li><label><input type="checkbox"><i></i>City</label></li>
        <li><label><input type="checkbox"><i></i>Country</label></li>
        <li><label><input type="checkbox"><i></i>Customer ID</label></li>
        <li><label><input type="checkbox"><i></i>Customer Name</label></li>
        <li><label><input type="checkbox"><i></i>Order Date</label></li>
        <li><label><input type="checkbox"><i></i>Order ID</label></li>
        <li><label><input type="checkbox"><i><svg width="14" height="16"><use href="#i-sigma"/></svg></i>Postal Code</label></li>
        <li><label><input type="checkbox"><i></i>Product ID</label></li>
        <li><label><input type="checkbox"><i></i>Product Name</label></li>
        <li><label><input type="checkbox" checked><i></i>Region</label><svg class="more" width="14" height="4" viewBox="0 0 14 4" fill="#3b3a39"><circle cx="1.500" cy="2" r="1"/><circle cx="7" cy="2" r="1"/><circle cx="12.500" cy="2" r="1"/></svg></li>
        <li><label><input type="checkbox"><i><svg width="14" height="16"><use href="#i-sigma"/></svg></i>Row ID</label></li>
        <li><label><input type="checkbox"><i><svg width="14" height="16"><use href="#i-sigma"/></svg></i>Sales</label></li>
        <li><label><input type="checkbox"><i></i>Segment</label></li>
        <li><label><input type="checkbox"><i></i>Ship Date</label></li>
        <li><label><input type="checkbox"><i></i>Ship Mode</label></li>
        <li><label><input type="checkbox" checked><i></i>State</label></li>
        <li><label><input type="checkbox"><i></i>Sub-Category</label></li>
      </ul>
    </aside>
  </main>

  <footer class="status">
    <span>Page 3 of 3</span>
    <div class="zoom"><button class="plain">-</button><input type="range" min="10" max="400" value="255" aria-label="Zoom"><button class="plain">+</button><span class="pct">180%</span><svg width="22" height="16" viewBox="0 0 22 16" fill="none" stroke="#605e5c"><path d="M1 1h20v14H1z" stroke-width="2"/><path d="M4 6V4h3M15 4h3v2M4 10v2h3M15 12h3v-2" stroke-width="1.300"/></svg></div>
  </footer>

  <footer class="taskbar">
    <div class="weather"><svg width="36" height="38" viewBox="0 0 36 38"><circle cx="22" cy="24" r="9" fill="#f47b20"/><path d="M8 36a7 7 0 0 1-1-14 9 9 0 0 1 17-2 8 8 0 0 1 3 16z" fill="url(#cloudG)"/><circle cx="24" cy="10" r="10" fill="#ff9aa4"/><text class="badge-num" x="24" y="15">2</text></svg><p>27°C<br><span>Mostly cloudy</span></p></div>
    <div class="dock">
      <button class="app-btn" aria-label="Start"><svg width="30" height="30" viewBox="0 0 30 30"><path d="M0 0h14.300v14.300H0zM15.700 0H30v14.300H15.700zM0 15.700h14.300V30H0zM15.700 15.700H30V30H15.700z" fill="url(#winG)"/></svg></button>
      <div class="task-search"><svg width="20" height="20" viewBox="0 0 20 20" fill="none" stroke="#f0f0f0" stroke-width="2"><circle cx="8" cy="8" r="6.500"/><path d="M13 13l5.500 6"/></svg><input type="text" placeholder="Search" aria-label="Search Windows"><svg width="52" height="28" viewBox="0 0 52 28"><path d="M2 8c4-5 11-5 15-2l1 8c-3 2-5-1-7 0s-2 3-4 3c-4 0-6-5-5-9z" fill="#7cc8ff" stroke="#f0407c" stroke-width="2"/><path d="M20 1h3v19c0 6-9 6-11 2" fill="none" stroke="#f0407c" stroke-width="2.600"/><path d="M34 1c7 0 13 4 18 9L34 26c-1 1-4 0-3-2z" fill="#1887f2"/><path d="M40 3l-7 19M46 7L35 23" stroke="#0a55b8" stroke-width="1.500"/></svg></div>
      <button class="app-btn" aria-label="Task view"><svg width="32" height="30" viewBox="0 0 32 30"><path d="M9 1h22v20H9z" fill="#f4f4f4"/><path d="M1 9h21v20H1z" fill="#8a8a8a" opacity=".75"/></svg></button>
      <button class="app-btn" aria-label="Copilot"><svg width="30" height="28"><use href="#i-copilot"/></svg></button>
      <button class="app-btn open" aria-label="File Explorer"><svg width="32" height="28" viewBox="0 0 32 28"><path d="M1 3c0-1 1-2 2-2h8l3 4h-3v5H1z" fill="#d99a12"/><path d="M1 5h28c1 0 2 1 2 2v18c0 1-1 2-2 2H3c-1 0-2-1-2-2z" fill="url(#folderG)"/><path d="M6 27v-5c0-2 1-3 3-3h14c2 0 3 1 3 3v5z" fill="#1c78d0"/><path d="M10 23h12" stroke="#0d4f96" stroke-width="1.500"/></svg></button>
      <button class="app-btn open" aria-label="Edge"><svg width="32" height="32" viewBox="0 0 32 32"><circle cx="16" cy="16" r="15" fill="#1466b8"/><path d="M1 15A15 15 0 0 1 31 14c0 6-5 8-10 7-3-1-1-3-1-5 0-4-4-6-8-6C7 10 3 12 1 15z" fill="url(#edgeG)"/><path d="M12 14c-6 5 0 15 9 14 3 0 6-2 8-4-6 2-15 1-16-6 0-2 1-3 2-4z" fill="#0b4a94"/><path d="M17 13c-4 2-4 8 2 10 4 1 8 0 12-2v-3c-3 3-8 4-11 2-1-1 1-3 0-5s-2-2-3-2z" fill="#262524"/></svg></button>
      <button class="app-btn" aria-label="Outlook"><svg width="32" height="30" viewBox="0 0 32 30"><path d="M6 9l12-8 13 9v17H10z" fill="#1a8fe6"/><path d="M31 11L14 20v9h14c2 0 3-1 3-3z" fill="#4cc8f5"/><path d="M10 19L26 7l5 3v2L14 24z" fill="#0d4a9c"/><rect x="1" y="9" width="16" height="15" rx="2" fill="#1170cc"/><ellipse cx="9" cy="16.500" rx="3.700" ry="4.200" fill="none" stroke="#fff" stroke-width="2.200"/></svg></button>
      <button class="app-btn open badged" aria-label="Chrome"><svg width="38" height="36" viewBox="0 0 38 36"><circle cx="16" cy="20" r="15" fill="#2da94f"/><path d="M3 12.500A15 15 0 0 1 29 12.500L16 20z" fill="#ea4335"/><path d="M29 12.500A15 15 0 0 1 16 35l-1-13 2-9z" fill="#fcc934"/><path d="M3 12.500L10 24l6-4V12.500z" fill="#ea4335"/><circle cx="16" cy="20" r="7" fill="#fff"/><circle cx="16" cy="20" r="5.500" fill="#3b7df0"/><circle cx="27" cy="10" r="10" fill="#e8e4dc"/><path d="M20 5c6-6 15 0 15 7-4 4-9 6-14 4z" fill="#c7a62c"/><path d="M20 14c3-2 3-7 6-8l4 2 4 6c-3 4-10 4-14 0z" fill="#20283a"/></svg></button>
      <button class="app-btn open current" aria-label="Power BI"><svg width="26" height="30" viewBox="0 0 26 30"><path d="M14 0h11v30H14z" fill="#d08a12"/><path d="M8 7h10v23H8z" fill="#ecb827"/><path d="M1 15h10v15H1z" fill="#f9e07c"/></svg></button>
      <button class="app-btn open" aria-label="WhatsApp"><svg width="34" height="36" viewBox="0 0 34 36"><path d="M3 34l2-8A13 13 0 1 1 11 32z" fill="none" stroke="#25d366" stroke-width="3"/><path d="M11 15c-2 6 7 14 12 12l1-3-4-2-2 2c-2-1-3-3-4-4l2-2-2-4z" fill="#25d366"/></svg><span class="count">99+</span></button>
    </div>
    <div class="tray">
      <svg width="16" height="10" viewBox="0 0 16 10"><path d="M2 8l6-6 6 6" fill="none" stroke="#fff" stroke-width="1.800"/></svg>
      <svg width="24" height="22" viewBox="0 0 24 22"><path d="M1 12A9 9 0 0 1 18 6M19 1v6h-6M9 20c-3 0-6-2-7-5M2 20v-5h5" fill="none" stroke="#fff" stroke-width="1.500"/><circle cx="16" cy="16" r="5.500" fill="#ff9810"/></svg>
      <p class="lang">ENG<br>IN</p>
      <div class="net">
        <svg width="20" height="16" viewBox="0 0 20 16" fill="none" stroke="#fff" stroke-width="1.600"><path d="M1 6c5-6 13-6 18 0M4 9c4-4 8-4 12 0M7 12c2-2 4-2 6 0"/><circle cx="10" cy="14" r="1" fill="#fff"/></svg>
        <svg width="20" height="18" viewBox="0 0 20 18" fill="none" stroke="#fff" stroke-width="1.400"><path d="M1 6h3l5-4v14l-5-4H1zM12 6c1 2 1 4 0 6M14.500 4c2 3 2 7 0 10M17 2c3 4 3 10 0 14"/></svg>
        <svg width="20" height="14" viewBox="0 0 20 14"><rect x="1" y="1" width="16" height="12" rx="3" fill="none" stroke="#fff" stroke-width="1.600"/><path d="M3.500 3.500h5v7h-5zM18 5h2v4h-2z" fill="#fff"/></svg>
      </div>
      <p class="clock">4:24 PM<br>8/6/2025</p>
    </div>
  </footer>
</div>
</body>
</html>
```
FILE: styles.css
```css
* { box-sizing: border-box; }
body { margin: 0; font: 14px/20px "Open Sans", "Noto Sans", sans-serif; color: #252423; }
button, input { font: inherit; color: inherit; }
button { background: none; border: 0; padding: 0; }
h2, h3, h4, p, ul { margin: 0; padding: 0; font-weight: 400; font-size: inherit; }
svg { flex: none; }
.defs { position: absolute; width: 0; height: 0; }
.plain { display: flex; align-items: center; }
.line-dark, .eye { fill: none; stroke: #3b3a39; stroke-width: 1.3px; }
.app { display: flex; flex-direction: column; height: 100vh; min-height: 1000px; overflow: hidden; }

/* Title bar */
.titlebar { display: flex; align-items: center; justify-content: space-between; height: 43px; background: #3b3a39; color: #fff; flex: none; }
.title-left { display: flex; align-items: center; gap: 20px; padding-left: 21px; flex: 1; }
.doc-name { padding-top: 5px; margin-left: -10px; }
.title-search { display: flex; align-items: center; gap: 16px; width: 500px; height: 30px; margin: 0 0 2px 73px; padding-left: 20px; background: #d2d0ce; border-radius: 3px; }
.title-search input { flex: 1; min-width: 0; border: 0; background: none; font-size: 16px; }
.title-search input::placeholder { color: #2b5a4f; opacity: 1; }
.title-right { display: flex; align-items: center; justify-content: flex-end; gap: 41px; padding-right: 19px; flex: 1; }
.signin { gap: 12px; }

/* Menu */
.menu { display: flex; align-items: flex-start; height: 45px; padding-left: 8px; background: #fafafa; font-size: 16px; flex: none; }
.tab { height: 38px; padding: 0 21px 0 20px; }
.file { margin-right: 7px; }
.tab.active { font-weight: 600; }
.tab.active span { display: block; line-height: 35px; padding-top: 1px; margin-bottom: -2px; border-bottom: 3px solid #117865; }
.context { background: #fff; color: #117865; font-weight: 600; margin-right: 5px; }
.share { display: flex; align-items: center; gap: 10px; margin: 5px 6px 0 auto; width: 105px; height: 30px; padding-left: 8px; background: #117865; color: #fff; border-radius: 4px; font-size: 15px; }
.share svg:last-child { margin-left: -4px; }

/* Ribbon */
.ribbon { display: flex; align-items: flex-start; height: 112px; padding-bottom: 2px; background: #fafafa; box-shadow: 0 1px 5px #0003; position: relative; z-index: 2; flex: none; }
.group { display: flex; flex-direction: column; height: 110px; border-right: 1px solid #c8c6c4; flex: none; }
.tiles { display: flex; padding-top: 3px; }
.group-name { margin-top: auto; height: 14px; line-height: 14px; text-align: center; font-size: 12px; }
.clipboard { padding: 0 10px 0 7px; width: 201px; }
.data { padding: 0 16px 0 4px; }
.queries { padding: 0 15px 0 9px; }
.insert { padding: 0 8px 0 6px; }
.calc { padding: 0 16px 0 12px; }
.sens { padding: 0 9px 0 10px; }
.pub { padding: 0 9px 0 8px; }
.cop { padding: 0 12px 0 7px; }
.tile { display: flex; flex-direction: column; align-items: center; gap: 2px; height: 90px; padding-top: 3px; white-space: nowrap; }
.tile > svg { width: 40px; height: 40px; }
.tile:disabled { color: #c8c6c4; }
.caret { width: 8px; height: 6px; margin-left: 4px; vertical-align: middle; }
.hover { background: #f5f5f5; }
.w48 { width: 48px; }
.w56 { width: 56px; }
.w60 { width: 60px; }
.w64 { width: 64px; }
.w72 { width: 72px; }
.w84 { width: 84px; }
.w96 { width: 96px; }
.mini-list { display: flex; flex-direction: column; margin: -3px 0 0 1px; }
.mini { display: flex; align-items: center; gap: 5px; height: 30px; white-space: nowrap; }
.mini svg { width: 22px; height: 22px; }
.ribbon-up { margin: 97px 4px 0 auto; }

/* Work area */
.work { display: flex; flex: 1; min-height: 0; background: #f3f2f1; }
.rail { width: 51px; border-right: 1px solid #e1dfdd; flex: none; }
.rail-item { display: flex; align-items: center; justify-content: center; width: 50px; height: 50px; }
.rail-item.on { border-left: 3px solid #117865; padding-right: 3px; }
.rail-text { font: 600 9px "Open Sans", sans-serif; fill: #605e5c; stroke: none; }
.center { flex: 1; min-width: 0; display: flex; flex-direction: column; }
.stage { flex: 1; min-height: 0; display: flex; }
.canvas { flex: 1; min-width: 0; position: relative; overflow: hidden; background: #fff; padding: 11px 12px 14px 11px; }
.page { height: 100%; border: dotted #3b3a39; border-width: 2px 0 0 2px; padding-left: 22px; }
.vbar { position: absolute; right: 2px; top: 0; width: 11px; height: 327px; border-radius: 5px; background: #8a8886; }
.hbar { position: absolute; left: 0; bottom: 2px; width: 296px; height: 11px; border-radius: 5px; background: #8a8886; }

/* Visual */
.visual { position: relative; width: 630px; height: 630px; border: 1px solid #c8c6c4; }
.visual-head { display: flex; justify-content: space-between; padding: 0 5px 0 11px; }
.visual h2 { font: 500 37px/46px Roboto, sans-serif; }
.visual-tools { display: flex; align-items: center; gap: 14px; height: 32px; fill: none; stroke: #797775; stroke-width: 1.3px; }
.h { position: absolute; border: 0 solid #979593; }
.tl, .tr, .bl.h, .br { width: 13px; height: 13px; }
.tl { left: -3px; top: -1px; border-width: 3px 0 0 5px; }
.tr { right: -3px; top: -1px; border-width: 0 3px 0 0; }
.h.bl { left: -3px; bottom: -3px; border-width: 0 0 5px 5px; }
.br { right: -3px; bottom: -3px; border-width: 0 5px 5px 0; }
.tc { left: 307px; top: -1px; width: 15px; border-top-width: 3px; }
.bc { left: 307px; bottom: -3px; width: 15px; border-top-width: 5px; }
.ml { left: -3px; top: 306px; height: 15px; border-left-width: 5px; }
.mr { right: -3px; top: 306px; height: 15px; border-left-width: 5px; }
.chart { display: grid; grid-template-columns: 50px 550px 18px; grid-template-rows: 460px 48px 40px; margin-top: 26px; font-size: 26px; color: #605e5c; }
.y-title { writing-mode: vertical-rl; rotate: 180deg; text-align: center; font: 500 32px/34px Roboto, sans-serif; color: #252423; margin-left: 12px; width: 34px; }
.rows { position: relative; padding-top: 12px; }
.gridlines { position: absolute; left: 185px; top: 8px; }
.bar-row { position: relative; display: flex; align-items: center; height: 48px; }
.bar-row span { width: 165px; text-align: right; white-space: nowrap; }
.bar-row b { height: 36px; margin-left: 20px; background: #118dff; }
.chart-scroll { border-radius: 9px; background: #f0f0f0; }
.chart-scroll i { display: block; height: 82px; border-radius: 9px; background: #b3b3b3; }
.ticks { grid-column: 2; display: flex; justify-content: space-between; align-items: center; padding-left: 170px; line-height: 34px; }
.x-title { grid-column: 2; padding-left: 168px; text-align: center; font: 500 32px/38px Roboto, sans-serif; color: #252423; }

/* Panes */
.pane-head { display: flex; align-items: center; height: 50px; padding: 0 8px 0 10px; }
.pane-head h2 { font-size: 17px; font-weight: 600; margin-right: auto; }
.filters { width: 251px; flex: none; background: #fff; border-left: 1px solid #a19f9d; overflow: hidden; }
.filters .pane-head { padding: 0 12px 0 13px; }
.filters .pane-head h2 { margin-left: 8px; }
.filters .eye { margin-right: 19px; stroke-width: 1.5px; }
.filters-search { padding: 7px 15px 5px 10px; border-bottom: 1px solid #a19f9d; }
.box { display: flex; align-items: center; background: #fff; }
.box input { flex: 1; min-width: 0; border: 0; padding: 0; background: none; }
.box input::placeholder { color: #484644; opacity: 1; }
.filters-search .box { height: 42px; padding-left: 13px; gap: 12px; border: 1px solid #a19f9d; border-radius: 2px; font-size: 15px; }
.filter-group { padding: 15px 10px 12px; }
.filter-group h3 { display: flex; justify-content: space-between; line-height: 31px; padding: 0 5px 6px 0; }
.card { height: 77px; margin-bottom: 8px; padding: 4px 10px; border: 1px solid #c8c6c4; border-radius: 2px; line-height: 33px; }
.drop { height: 57px; border: 1px solid #c8c6c4; border-radius: 2px; text-align: center; line-height: 55px; }
.pane { width: 226px; flex: none; border-left: 1px solid #e1dfdd; overflow: hidden; display: flex; flex-direction: column; }
.pane > * { flex: none; }

.order-tabs { display: grid; grid-template-columns: 1fr 1fr; height: 46px; }
.order-tabs button { padding-bottom: 10px; }
.order-tabs .on { border-bottom: 2px solid #117865; padding-bottom: 8px; }
.order-tools { display: flex; align-items: center; gap: 16px; height: 37px; margin-bottom: 1px; padding: 0 12px 2px; border-bottom: 1px solid #e1dfdd; }
.order-tools .show { margin-left: auto; }
.layer { display: flex; align-items: center; height: 30px; margin: 0 1px; padding: 0 3px 0 23px; gap: 5px; background: #e1dfdd; border-left: 5px solid #117865; border-radius: 4px; }
.layer span { white-space: nowrap; flex: 1; }

.build { font-weight: 600; padding-left: 10px; line-height: 16px; }
.modes { display: flex; justify-content: space-between; align-items: center; padding: 6px 9px 5px 10px; }
.mode { display: flex; align-items: center; justify-content: center; width: 40px; height: 40px; }
.mode.on { background: #d2d0ce; border-radius: 2px; }
.notch { display: block; width: 225px; height: 11px; }
.gallery { display: grid; grid-template-columns: repeat(6, 35px); grid-auto-rows: 35px; padding: 7px 0 0 8px; }
.gallery button { display: flex; align-items: center; justify-content: center; }
.gallery svg { width: 24px; height: 24px; overflow: visible; }
.gallery .picked { border: 1px solid #252423; width: 30px; height: 30px; margin: 2px; background: #fff; }
.gallery .b { fill: #83beec; stroke: #1f6fb4; stroke-width: 1.4px; }
.gallery .g { fill: #c8c6c4; stroke: #797775; stroke-width: 1.4px; }
.gallery .w { fill: #fff; stroke: #3b3a39; stroke-width: 1.4px; }
.gallery .a { fill: #f3f2f1; stroke: #1f6fb4; stroke-width: 1px; }
.gallery .o { fill: #fbc674; stroke: #dd7010; stroke-width: 1.2px; }
.gallery .n { fill: none; stroke: #3b3a39; stroke-width: 1.5px; }
.gallery .gl { fill: none; stroke: #979593; stroke-width: 1.3px; }
.gallery .bl { fill: none; stroke: #1f7fc4; stroke-width: 1.6px; }
.gallery path[fill="#fff"].bl { fill: #fff; }
.num { font: 11px "Open Sans", sans-serif; fill: #1f7fc4; }
.letters { font: 700 19px "Open Sans", sans-serif; fill: #1f7fc4; }
.more-viz { display: flex; gap: 6px; height: 41px; padding: 15px 17px; border-bottom: 1px solid #e1dfdd; }
.more-viz i { width: 2px; height: 2px; background: #252423; }
.wells { position: relative; flex: 0 1 358px; padding: 6px 6px 0 5px; overflow: hidden; }
.wells-bar { position: absolute; right: 0; top: 2px; width: 7px; height: 235px; border-radius: 4px; background: #8a8886; }
.wells h4 { line-height: 32px; padding-left: 10px; }
.well { height: 35px; margin: 0 1px 8px 0; padding-left: 13px; background: #fff; border: 1px dashed #c8c6c4; border-radius: 2px; line-height: 33px; }
.well.filled { height: 44px; padding: 4px 3px; }
.pill { display: flex; align-items: center; gap: 6px; height: 28px; padding: 0 4px 0 5px; background: #edebe9; border: 1px solid #c8c6c4; border-radius: 2px; line-height: 26px; }
.pill svg:first-child { margin-left: auto; }

.fields { width: 225px; }
.data-search { height: 30px; margin: 7px 5px 0; padding-left: 15px; gap: 9px; border: 1px solid #d2d0ce; border-bottom-color: #605e5c; border-radius: 4px; font-size: 16px; }
.data-search input { height: 28px; padding-top: 2px; }
.data-search input::placeholder { color: #797775; }
.table-name { display: flex; align-items: center; height: 30px; margin-top: 12px; padding-left: 16px; }
.table-name svg + svg { margin: 4px 0 0 4px; }
.field-list { list-style: none; }
.field-list li { display: flex; align-items: center; height: 30px; padding: 0 8px 0 55px; }
.field-list label { display: flex; align-items: center; white-space: nowrap; }
.field-list input { appearance: none; width: 15px; height: 15px; margin: 0; border: 1px solid #797775; border-radius: 2px; background: #f8f7f6; }
.field-list input:checked { border-color: #117865; background: #117865; }
.field-list input:checked::before { content: ""; display: block; width: 9px; height: 5px; margin: 2px; border: solid #fff; border-width: 0 0 2px 2px; rotate: -45deg; }
.field-list label i { display: flex; width: 33px; padding-left: 11px; }
.more { margin-left: auto; }

/* Page tabs */
.pages { display: flex; align-items: center; height: 44px; padding-left: 12px; background: #f3f2f1; flex: none; }
.view { display: flex; justify-content: center; align-items: center; width: 30px; height: 36px; margin-right: 26px; }
.view.on { border-bottom: 3px solid #117865; }
.step { margin: 0 20px 0 0; }
.view + .step { margin-left: -8px; }
.step + .page-tab { border-left-color: #a19f9d; margin-left: -12px; }
.page-tab { width: 96px; height: 44px; background: #fff; border-left: 1px solid #d2d0ce; }
.page-tab.on { font-weight: 600; border-bottom: 5px solid #117865; padding-top: 5px; }
.page-add { display: flex; align-items: center; justify-content: center; width: 49px; height: 44px; background: #117865; }

/* Status bar */
.status { display: flex; justify-content: space-between; align-items: center; height: 29px; padding: 3px 21px 0 5px; background: #f3f2f1; border-top: 1px solid #e1dfdd; color: #484644; flex: none; }
.zoom { display: flex; align-items: center; gap: 7px; }
.zoom .plain { font-size: 18px; font-weight: 600; }
.zoom input { appearance: none; width: 125px; height: 12px; margin: 0; background: linear-gradient(#605e5c, #605e5c) center / 100% 1px no-repeat, linear-gradient(#605e5c, #605e5c) center / 1px 7px no-repeat; }
.zoom input::-webkit-slider-thumb { appearance: none; width: 5px; height: 12px; background: #605e5c; }
.pct { margin: 0 8px 0 10px; color: #797775; }

/* Taskbar */
.taskbar { display: grid; grid-template-columns: 1fr auto 1fr; align-items: center; height: 60px; background: #262524; border-top: 1px solid #000; color: #fff; flex: none; font-size: 15px; line-height: 20px; }
.weather { display: flex; align-items: center; gap: 4px; padding-left: 24px; }
.weather span { color: #d2d0ce; }
.badge-num { font: 14px "Open Sans", sans-serif; text-anchor: middle; fill: #252423; }
.dock { display: flex; align-items: center; gap: 5px; }
.app-btn { position: relative; display: flex; align-items: center; justify-content: center; width: 50px; height: 50px; border-radius: 4px; }
.open::after { content: ""; position: absolute; bottom: 1px; width: 8px; height: 4px; border-radius: 2px; background: #979593; }
.badged { padding-left: 6px; }
.badged::after { left: 21px; }
.current { background: #353433; }
.current::after { width: 20px; background: #4cc2ff; }
.task-search { display: flex; align-items: center; width: 276px; height: 40px; margin: 0 2px; padding: 0 10px 0 14px; gap: 12px; border: 1px solid #5a5958; border-radius: 20px; background: #413f3e; }
.task-search input { flex: 1; min-width: 0; border: 0; padding: 0; background: none; }
.task-search input::placeholder { color: #d2d0ce; opacity: 1; }
.count { position: absolute; left: 18px; top: 4px; width: 34px; height: 20px; border-radius: 10px; background: #4cc2ff; color: #252423; font-size: 14px; }
.tray { display: flex; align-items: center; justify-content: flex-end; gap: 22px; padding-right: 23px; }
.lang { text-align: center; }
.net { display: flex; align-items: center; gap: 10px; }
.clock { text-align: right; }
```
